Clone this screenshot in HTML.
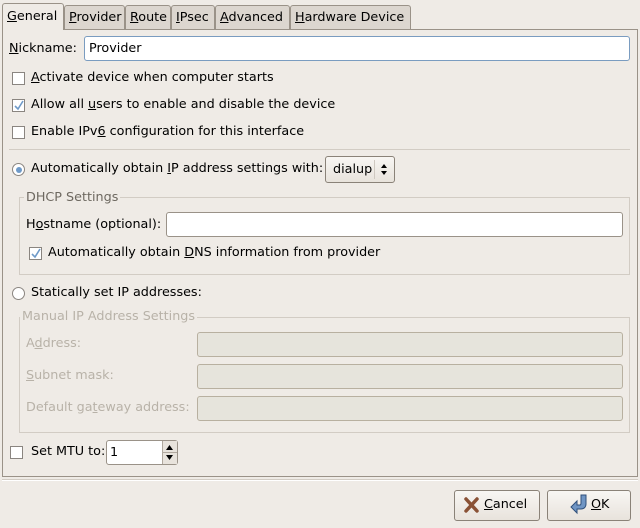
<!DOCTYPE html>
<html><head><meta charset="utf-8"><style>
*{box-sizing:border-box;margin:0;padding:0}
body{width:640px;height:528px;background:#efebe6;font-family:"DejaVu Sans","Liberation Sans",sans-serif;font-size:12.75px;color:#000;position:relative;overflow:hidden}
.a{position:absolute;white-space:nowrap}
.tab{position:absolute;top:5px;height:24px;border:1px solid #9a9288;border-bottom:none;border-radius:3px 3px 0 0;background:#dcd6cf;padding:4px 0 0 4px}
.tab.act{top:3px;height:27px;background:#efebe6;z-index:2;padding-top:5px}
.panel{position:absolute;left:2px;top:29px;width:636px;height:448px;border:1px solid #9a9288;background:#efebe6}
.cb{position:absolute;width:13px;height:13px;border:1px solid #8a8580;background:#fff}
.rb{position:absolute;width:13px;height:13px;border:1px solid #8a8580;background:#fff;border-radius:50%}
.entry{position:absolute;background:#fff;border:1px solid #9a9288;border-radius:3px}
.dis{color:#b8b2a8}
.dentry{position:absolute;background:#e6e4dc;border:1px solid #b8b0a0;border-radius:3px}
.frame{position:absolute;border:1px solid #d2ccc4}
.btn{position:absolute;border:1px solid #8a8278;border-radius:3px;background:linear-gradient(#f8f6f3,#e8e3dc)}
u{text-decoration:underline}
</style></head><body>
<div class="panel"></div>
<div class="tab act" style="left:2px;width:62px"><u>G</u>eneral</div>
<div class="tab" style="left:64px;width:61px"><u>P</u>rovider</div>
<div class="tab" style="left:125px;width:46px"><u>R</u>oute</div>
<div class="tab" style="left:171px;width:44px"><u>I</u>Psec</div>
<div class="tab" style="left:215px;width:75px"><u>A</u>dvanced</div>
<div class="tab" style="left:290px;width:121px"><u>H</u>ardware Device</div>

<div class="a" style="left:9px;top:41px"><u>N</u>ickname:</div>
<div class="entry" style="left:84px;top:36px;width:546px;height:25px;border-color:#7a9cc0"></div>
<div class="a" style="left:89px;top:41px">Provider</div>

<div class="cb" style="left:12px;top:72px"></div>
<div class="a" style="left:31px;top:70px"><u>A</u>ctivate device when computer starts</div>
<div class="cb" style="left:12px;top:99px"></div>
<svg class="a" style="left:13px;top:100px" width="11" height="11"><path d="M2 6l3 3l5-8" stroke="#6f9ac8" stroke-width="1.6" fill="none"/></svg>
<div class="a" style="left:31px;top:97px">Allow all <u>u</u>sers to enable and disable the device</div>
<div class="cb" style="left:12px;top:126px"></div>
<div class="a" style="left:31px;top:124px">Enable IPv<u>6</u> configuration for this interface</div>
<div class="a" style="left:9px;top:149px;width:621px;height:1px;background:#d2ccc4"></div>

<div class="rb" style="left:12px;top:163px"></div>
<div class="a" style="left:15.5px;top:166.5px;width:6px;height:6px;border-radius:50%;background:#6f9ac8"></div>
<div class="a" style="left:31px;top:161px">Automatically obtain <u>I</u>P address settings with:</div>
<div class="btn" style="left:325px;top:156px;width:70px;height:27px"></div>
<div class="a" style="left:333px;top:162px">dialup</div>
<div class="a" style="left:374px;top:160px;width:1px;height:19px;background:#cfc9c1"></div>
<svg class="a" style="left:380px;top:163px" width="8" height="13"><path d="M4 1L7 5H1Z M4 12L7 8H1Z" fill="#000"/></svg>

<div class="frame" style="left:19px;top:197px;width:611px;height:78px"></div>
<div class="a" style="left:24px;top:190px;background:#efebe6;color:#6d6860;padding:0 2px">DHCP Settings</div>
<div class="a" style="left:26px;top:217px">H<u>o</u>stname (optional):</div>
<div class="entry" style="left:166px;top:212px;width:457px;height:25px"></div>
<div class="cb" style="left:29px;top:247px"></div>
<svg class="a" style="left:30px;top:248px" width="11" height="11"><path d="M2 6l3 3l5-8" stroke="#6f9ac8" stroke-width="1.6" fill="none"/></svg>
<div class="a" style="left:48px;top:245px">Automatically obtain <u>D</u>NS information from provider</div>

<div class="rb" style="left:12px;top:287px"></div>
<div class="a" style="left:31px;top:285px">Statically set IP addresses:</div>

<div class="frame" style="left:19px;top:317px;width:611px;height:116px"></div>
<div class="a dis" style="left:20px;top:309px;background:#efebe6;padding:0 2px">Manual IP Address Settings</div>
<div class="a dis" style="left:26px;top:336px">A<u>d</u>dress:</div>
<div class="dentry" style="left:197px;top:332px;width:426px;height:25px"></div>
<div class="a dis" style="left:26px;top:368px"><u>S</u>ubnet mask:</div>
<div class="dentry" style="left:197px;top:364px;width:426px;height:25px"></div>
<div class="a dis" style="left:26px;top:400px">Default ga<u>t</u>eway address:</div>
<div class="dentry" style="left:197px;top:396px;width:426px;height:25px"></div>

<div class="cb" style="left:10px;top:446px"></div>
<div class="a" style="left:31px;top:444px">Set MTU to:</div>
<div class="entry" style="left:106px;top:440px;width:72px;height:25px"></div>
<div class="a" style="left:110px;top:445px">1</div>
<div class="a" style="left:162px;top:441px;width:15px;height:23px;background:#e8e3dc;border-left:1px solid #b0a89e"></div>
<div class="a" style="left:162px;top:452px;width:15px;height:1px;background:#b0a89e"></div>
<svg class="a" style="left:165px;top:443px" width="9" height="20"><path d="M4.5 2L8 7H1Z M4.5 17L8 12H1Z" fill="#000"/></svg>

<div class="a" style="left:2px;top:479px;width:636px;height:1px;background:#d2ccc4"></div>
<div class="a" style="left:2px;top:480px;width:636px;height:1px;background:#fff"></div>

<div class="btn" style="left:454px;top:490px;width:86px;height:31px"></div>
<svg class="a" style="left:463px;top:496px" width="17" height="18"><path d="M3 3L14 15M14 3L3 15" stroke="#8a5236" stroke-width="3.5" stroke-linecap="round"/></svg>
<div class="a" style="left:484px;top:497px"><u>C</u>ancel</div>
<div class="btn" style="left:547px;top:490px;width:84px;height:31px"></div>
<svg class="a" style="left:569px;top:493px" width="20" height="22"><path d="M12 2h5v9c0 3-2 5-5 5H8v4L2 14l6-6v4h3c1 0 1-1 1-2Z" fill="#6f95c4" stroke="#2f4f7a" stroke-width="1"/></svg>
<div class="a" style="left:591px;top:497px"><u>O</u>K</div>
</body></html>
